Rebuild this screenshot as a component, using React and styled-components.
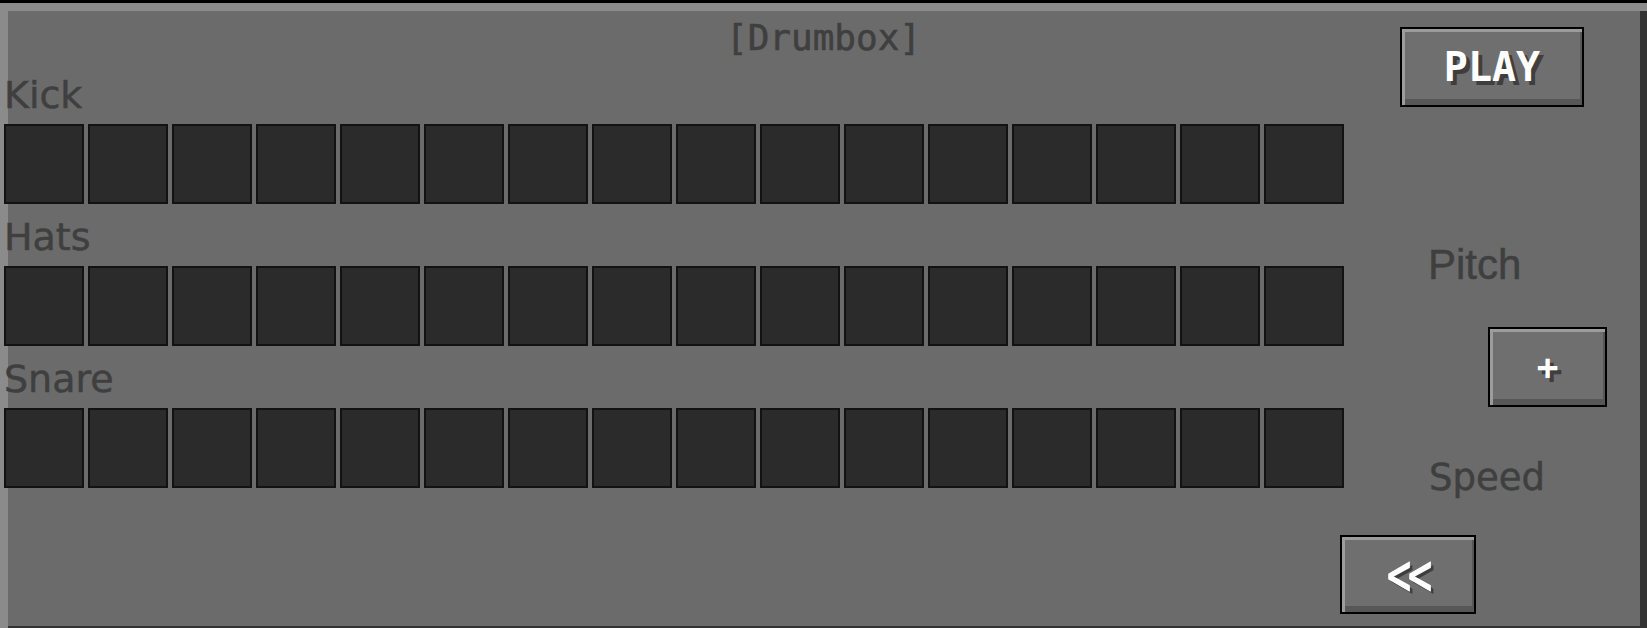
import React from "react";
import styled, { createGlobalStyle } from "styled-components";

const GlobalStyle = createGlobalStyle`
  body {
    margin: 0;
    background: #6b6b6b;
  }
`;

const TRACKS = ["Kick", "Hats", "Snare"];
const STEPS = 16;

const Window = styled.div`
  width: 1647px;
  height: 628px;
  box-sizing: border-box;
  border-top: 3px solid #000;
  background: #6b6b6b;
  box-shadow: inset 8px 8px 0 #8b8b8b, inset -7px -2px 0 #333;
  display: grid;
  grid-template-columns: 1340px 1fr;
  grid-template-rows: auto 1fr;
  overflow: hidden;
`;

const Title = styled.h1`
  grid-column: 1 / -1;
  grid-row: 1;
  justify-self: center;
  margin: 17px 0 0;
  font-family: "DejaVu Sans Mono", monospace;
  font-weight: normal;
  font-size: 36px;
  line-height: 36px;
  color: #3f3f3f;
  -webkit-text-stroke: 0.6px #3f3f3f;
`;

const Tracks = styled.div`
  grid-column: 1;
  grid-row: 2;
  display: flex;
  flex-direction: column;
  gap: 14px;
  padding: 20px 0 0 4px;
`;

const Track = styled.section`
  display: flex;
  flex-direction: column;
  gap: 10px;
`;

const TrackLabel = styled.div`
  font-family: "DejaVu Sans", sans-serif;
  font-size: 38px;
  line-height: 38px;
  color: #3f3f3f;
  -webkit-text-stroke: 0.5px #3f3f3f;
`;

const Steps = styled.div`
  display: flex;
  gap: 4px;
`;

const Step = styled.button`
  flex: 0 0 auto;
  width: 80px;
  height: 80px;
  box-sizing: border-box;
  padding: 0;
  border: 2px solid #121212;
  background: ${(p) => (p.$on ? "#8a8a8a" : "#2b2b2b")};
  cursor: pointer;
`;

const Controls = styled.div`
  grid-column: 2;
  grid-row: 1 / -1;
  display: flex;
  flex-direction: column;
  align-items: flex-start;
`;

const ControlLabel = styled.div`
  margin: ${(p) => p.$top}px 0 0 ${(p) => p.$left}px;
  font-family: ${(p) => (p.$serif ? '"Liberation Sans", Arial' : '"DejaVu Sans"')}, sans-serif;
  font-size: ${(p) => p.$size}px;
  line-height: ${(p) => p.$size}px;
  color: #3f3f3f;
  -webkit-text-stroke: 0.5px #3f3f3f;
`;

const McButton = styled.button`
  margin: ${(p) => p.$top}px 0 0 ${(p) => p.$left}px;
  width: ${(p) => p.$w}px;
  height: ${(p) => p.$h}px;
  box-sizing: border-box;
  padding: 0;
  border: 2px solid #000;
  background: #6f6f6f;
  box-shadow: inset 3px 3px 0 #9c9c9c, inset -2px -6px 0 #575757;
  display: flex;
  align-items: center;
  justify-content: center;
  font-family: "DejaVu Sans Mono", monospace;
  font-weight: bold;
  font-size: ${(p) => p.$font}px;
  color: #fff;
  text-shadow: 4px 4px 0 #3e3e3e;
  cursor: pointer;
`;

const Chevrons = styled.span`
  display: inline-block;
  font-weight: normal;
  letter-spacing: -3px;
  transform: scaleY(1.45);
  -webkit-text-stroke: 0.8px #fff;
  text-shadow: 3px 2px 0 #3e3e3e;
`;

export default function App() {
  const [grid, setGrid] = React.useState(() =>
    TRACKS.map(() => Array(STEPS).fill(false))
  );

  const toggle = (t, s) =>
    setGrid((g) =>
      g.map((row, i) => (i === t ? row.map((v, j) => (j === s ? !v : v)) : row))
    );

  return (
    <>
      <GlobalStyle />
      <Window>
        <Title>[Drumbox]</Title>
        <Tracks>
          {TRACKS.map((name, t) => (
            <Track key={name}>
              <TrackLabel>{name}</TrackLabel>
              <Steps>
                {grid[t].map((on, s) => (
                  <Step key={s} $on={on} onClick={() => toggle(t, s)} />
                ))}
              </Steps>
            </Track>
          ))}
        </Tracks>
        <Controls>
          <McButton $top={24} $left={60} $w={184} $h={80} $font={40}>
            PLAY
          </McButton>
          <ControlLabel $top={137} $left={88} $size={42} $serif>
            Pitch
          </ControlLabel>
          <McButton $top={41} $left={148} $w={119} $h={80} $font={36}>
            +
          </McButton>
          <ControlLabel $top={52} $left={89} $size={37}>
            Speed
          </ControlLabel>
          <McButton $top={39} $left={0} $w={136} $h={79} $font={40}>
            <Chevrons>{"<<"}</Chevrons>
          </McButton>
        </Controls>
      </Window>
    </>
  );
}
